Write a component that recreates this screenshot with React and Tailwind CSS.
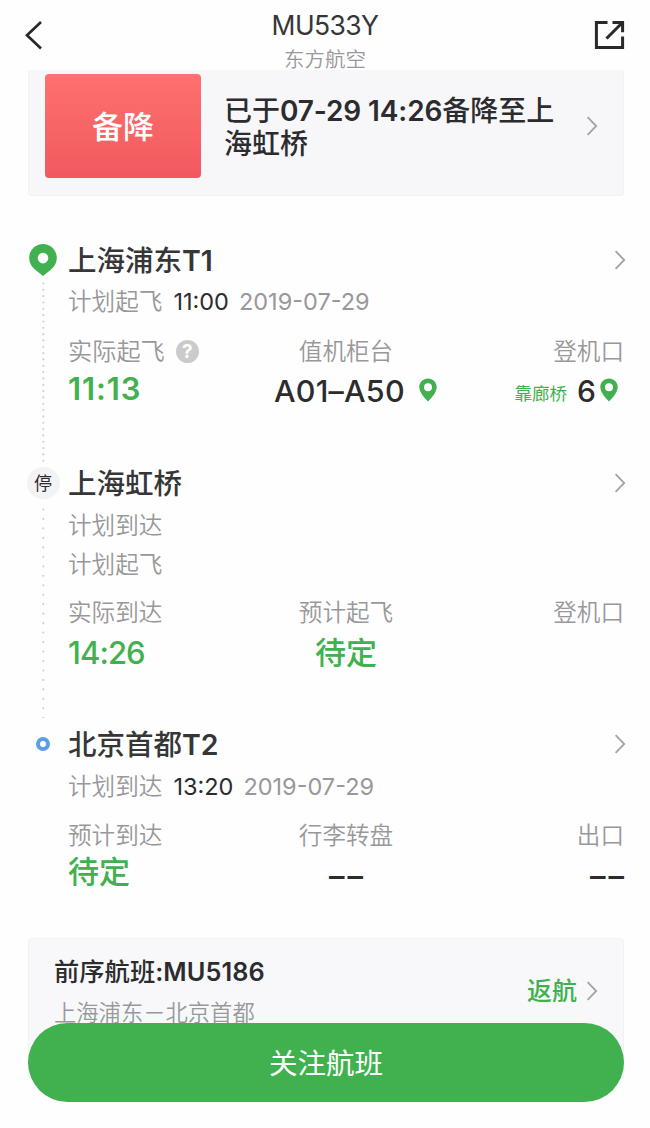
import React from "react";

function Chevron({ className = "" }) {
  return (
    <svg className={`shrink-0 ${className}`} width="12" height="20" viewBox="0 0 12 20" fill="none" stroke="#a3a3a6" strokeWidth="1.8">
      <path d="M1.6 1.2 10.2 10 1.6 18.8" />
    </svg>
  );
}

function Pin({ className = "" }) {
  return (
    <svg className={`shrink-0 ${className}`} width="18" height="24" viewBox="0 0 18 24">
      <path
        fill="#41b14f"
        fillRule="evenodd"
        d="M9 .5C4.1.5.3 4.3.3 9c0 5.400 5.200 10.800 8.700 14.500C12.500 19.800 17.700 14.400 17.700 9 17.700 4.300 13.900.5 9 .5Zm0 4.700a4 4 0 1 1 0 8 4 4 0 0 1 0-8Z"
      />
    </svg>
  );
}

function OriginMarker({ className = "" }) {
  return (
    <svg width="28" height="32" viewBox="0 0 28 32" className={`shrink-0 ${className}`}>
      <path
        fill="#41b14f"
        fillRule="evenodd"
        d="M14 0C6.300 0 .2 6.200.2 13.800c0 5 2.500 8.900 6 11.900L14 32l7.800-6.300c3.500-3 6-6.900 6-11.900C27.800 6.200 21.700 0 14 0Zm0 8.800a5.300 5.300 0 1 1 0 10.600 5.300 5.300 0 0 1 0-10.600Z"
      />
    </svg>
  );
}

function Dots({ height, pitch, className = "" }) {
  return (
    <svg width="4" height={height} className={`shrink-0 ${className}`}>
      <line x1="2.3" y1="1.5" x2="2.3" y2={height} stroke="#d0d2d4" strokeWidth="2.2" strokeLinecap="round" strokeDasharray={`0 ${pitch}`} />
    </svg>
  );
}

function StopTitle({ name, terminal }) {
  return (
    <div className="flex h-12 items-center justify-between">
      <h2 className="flex items-center pt-[3px] text-[28.5px] leading-none font-medium text-[#363638]">
        <span>{name}</span>
        {terminal && <span className="-mt-px font-semibold tracking-[-0.2px]">{terminal}</span>}
      </h2>
      <Chevron className="-mr-0.5" />
    </div>
  );
}

function Planned({ label, time, date, className = "" }) {
  return (
    <div className={`flex h-[34px] items-center pt-0.5 leading-none ${className}`}>
      <span className="text-[23.6px] font-[350] text-[#98989b]">{label}</span>
      {time && <span className="ml-[11px] text-[23.5px] text-[#2c2c2e]">{time}</span>}
      {date && <span className="ml-2.5 text-[23.5px] text-[#98989b]">{date}</span>}
    </div>
  );
}

function Labels({ items, help, className = "" }) {
  return (
    <div className={`grid h-8 grid-cols-3 items-center pt-0.5 text-[23.6px] leading-none font-[350] text-[#98989b] ${className}`}>
      <div className="flex items-center">
        <span className={help ? "text-[24.2px]" : ""}>{items[0]}</span>
        {help && (
          <span className="mb-0.5 ml-[11px] flex size-[23px] items-center justify-center rounded-full bg-[#cbcbcd] text-[19px] font-bold text-white">?</span>
        )}
      </div>
      <div className="text-center">{items[1]}</div>
      <div className="text-right">{items[2]}</div>
    </div>
  );
}

function Dashes({ className = "" }) {
  return (
    <span className={`-mr-[3px] pt-[9px] text-[31px] font-medium tracking-[3px] text-[#2c2c2e] ${className}`}>––</span>
  );
}

export default function App() {
  return (
    <main className="relative flex h-[1128px] w-[650px] flex-col overflow-hidden bg-[#fefefe] font-['Inter','Noto_Sans_CJK_SC',sans-serif]">
      <header className="flex h-[70px] shrink-0 justify-between pr-[25px] pl-[25px]">
        <svg className="mt-[21px]" width="18" height="29" viewBox="0 0 18 29" fill="none" stroke="#29292b" strokeWidth="2.700">
          <path d="M16 1 2 14.300 16 27.600" />
        </svg>
        <div className="flex flex-col items-center pl-[13px]">
          <h1 className="mt-[10px] text-[26.5px] leading-[30px] tracking-[-0.6px] text-[#363638]">MU533Y</h1>
          <p className="mt-[8px] text-[20.500px] leading-6 font-[350] text-[#98989b]">东方航空</p>
        </div>
        <svg className="mt-[20px]" width="31" height="30" viewBox="0 0 31 30" fill="none" stroke="#29292b" strokeWidth="3">
          <path d="M13.500 2.400H2.400V27.600H28.600V16.500" />
          <path d="M18.500 2.400H28.600V12.300M28 3 12.500 18.500" />
        </svg>
      </header>

      <section className="mx-7 flex h-[126px] w-[596px] shrink-0 rounded-b border border-t-0 border-[#f2f2f4] bg-[#f7f7f9] pl-4">
        <div className="mt-1 flex h-[104px] w-[156px] items-center justify-center rounded bg-linear-to-b from-[#ff7070] to-[#f1595e] text-[31px] leading-none font-medium text-white">
          备降
        </div>
        <p className="mt-[25px] ml-[23px] w-[340px] text-[28px] leading-[33px] font-medium text-[#2c2c2e]">
          已于<span className="font-semibold tracking-[-0.12px]">07-29 14:26</span>备降至上<br />海虹桥
        </p>
        <Chevron className="mt-[46px] ml-[22px]" />
      </section>

      <div className="mt-10 flex shrink-0 pr-[26px] pl-[27px]">
        <div className="flex w-8 flex-col items-center">
          <OriginMarker className="mt-2" />
          <Dots height={180} pitch={6.33} className="mt-[6px]" />
          <span className="mt-[5px] flex h-8 w-[33px] shrink-0 items-center justify-center rounded-full bg-[#f3f3f4] pt-0.5 text-[18px] leading-none text-[#2c2c2e]">
            停
          </span>
          <Dots height={210} pitch={9.47} className="mt-[9px]" />
          <span className="mt-[19px] size-[14px] shrink-0 rounded-full border-4 border-[#5a9fe8] bg-white" />
        </div>
        <div className="ml-[9px] flex-1">
          <section className="h-[223px]">
            <StopTitle name="上海浦东" terminal="T1" />
            <Planned label="计划起飞" time="11:00" date="2019-07-29" />
            <Labels className="mt-[17px]" items={["实际起飞", "值机柜台", "登机口"]} help />
            <div className="mt-[3px] flex h-10 items-center justify-between leading-none">
              <span className="mb-1 w-[206px] text-[31px] font-semibold tracking-[0.9px] text-[#41b14f]">11:13</span>
              <span className="flex items-center text-[30.500px] font-medium text-[#2c2c2e]">
                <span className="pt-0.5 tracking-[0.2px]">A01–A50</span>
                <Pin className="ml-[14px]" />
              </span>
              <span className="ml-auto flex items-center pr-[6px]">
                <span className="mt-2 text-[17.500px] text-[#41b14f]">靠廊桥</span>
                <span className="ml-[10px] pt-0.5 text-[30px] font-medium text-[#2c2c2e]">6</span>
                <Pin className="ml-1" />
              </span>
            </div>
          </section>
          <section className="h-[261px]">
            <StopTitle name="上海虹桥" />
            <Planned className="mt-px" label="计划到达" />
            <Planned className="mt-[5px]" label="计划起飞" />
            <Labels className="mt-[15px]" items={["实际到达", "预计起飞", "登机口"]} />
            <div className="mt-1 grid h-10 grid-cols-3 items-center text-[31px] leading-none font-medium text-[#41b14f]">
              <span className="tracking-[-0.9px]">14:26</span>
              <span className="text-center">待定</span>
            </div>
          </section>
          <section className="h-[172px]">
            <StopTitle name="北京首都" terminal="T2" />
            <Planned className="mt-px" label="计划到达" time="13:20" date="2019-07-29" />
            <Labels className="mt-4" items={["预计到达", "行李转盘", "出口"]} />
            <div className="mt-0 grid h-10 grid-cols-3 items-center text-[31px] leading-none">
              <span className="font-medium text-[#41b14f]">待定</span>
              <Dashes className="text-center" />
              <Dashes className="text-right" />
            </div>
          </section>
        </div>
      </div>

      <section className="mx-7 mt-[46px] flex h-[140px] w-[596px] shrink-0 justify-between rounded-t border border-[#f2f2f4] bg-[#f8f8fa] pr-[25px] pl-[25px]">
        <div>
          <h3 className="mt-[17px] text-[25.3px] leading-8 font-medium text-[#2c2c2e]">
            前序航班<span className="font-semibold tracking-[0.1px]">:MU5186</span>
          </h3>
          <p className="mt-[13px] text-[22.3px] leading-6 font-[350] text-[#98989b]">上海浦东－北京首都</p>
        </div>
        <div className="mt-[36px] flex h-8 items-center">
          <span className="pt-px text-[25px] leading-none font-medium text-[#41b14f]">返航</span>
          <Chevron className="ml-[9px]" />
        </div>
      </section>

      <button className="absolute top-[1023px] left-7 flex h-[79px] w-[596px] items-center justify-center rounded-full bg-[#41b14f] pt-[3px] text-[28.500px] leading-none text-white">
        关注航班
      </button>
    </main>
  );
}
